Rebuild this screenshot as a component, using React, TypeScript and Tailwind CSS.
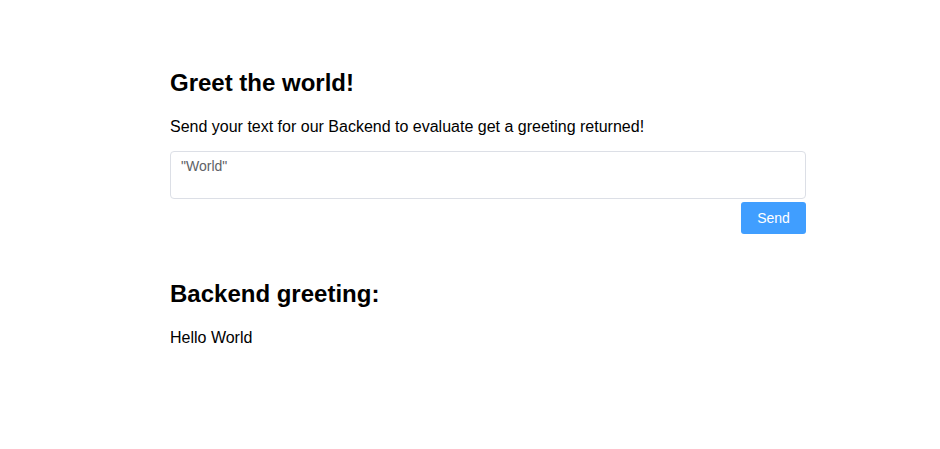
import { useState } from "react";

export default function App() {
  const [text, setText] = useState("");

  return (
    <div className="min-h-screen bg-white font-['Liberation_Sans',Arial,sans-serif] text-black pt-[69px]">
      <div className="ml-[170px] w-[636px] flex flex-col">
        <h2 className="text-[24px] leading-[28px] font-bold">Greet the world!</h2>
        <p className="mt-[18px] text-[16px] leading-[24px]">
          Send your text for our Backend to evaluate get a greeting returned!
        </p>

        <textarea
          value={text}
          onChange={(e) => setText(e.target.value)}
          placeholder={'"World"'}
          className="mt-[12px] h-[48px] w-full resize-none rounded-[4px] border border-[#dcdfe6] px-[10px] pt-[4px] text-[14px] leading-[21px] text-[#606266] placeholder:text-[#606266] outline-none"
        />
        <button className="mt-[3px] self-end h-[32px] w-[65px] rounded-[3px] bg-[#409eff] text-[14px] text-white">
          Send
        </button>

        <h2 className="mt-[46px] text-[24px] leading-[28px] font-bold">Backend greeting:</h2>
        <p className="mt-[18px] text-[16px] leading-[24px]">Hello World</p>
      </div>
    </div>
  );
}
